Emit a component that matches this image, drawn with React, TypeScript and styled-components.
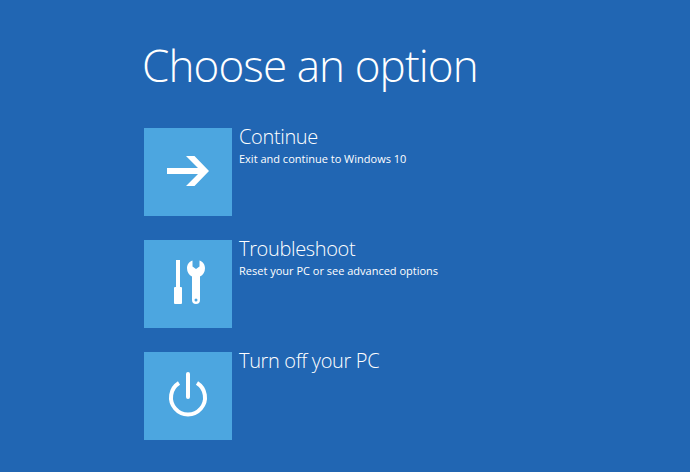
import React from 'react';
import styled, { createGlobalStyle } from 'styled-components';

const GlobalStyle = createGlobalStyle`
  html, body {
    margin: 0;
    padding: 0;
    background: #2166b3;
  }
`;

const Screen = styled.div`
  width: 690px;
  height: 472px;
  overflow: hidden;
  box-sizing: border-box;
  padding: 34px 0 0 144px;
  background: #2166b3;
  color: #fff;
  font-family: "Open Sans", "Noto Sans", sans-serif;
`;

const Title = styled.h1`
  margin: 0 0 32px -2px;
  height: 62px;
  font-size: 44px;
  line-height: 62px;
  font-weight: 300;
  letter-spacing: -0.9px;
  white-space: nowrap;
`;

const Options = styled.div`
  display: flex;
  flex-direction: column;
  gap: 24px;
`;

const Option = styled.div`
  display: flex;
  gap: 7px;
  height: 88px;
`;

const Tile = styled.div`
  flex: none;
  width: 88px;
  height: 88px;
  background: #4ca6e0;

  svg {
    display: block;
  }
`;

const Name = styled.div`
  font-size: 20px;
  line-height: 18px;
  font-weight: 300;
  letter-spacing: -0.35px;
  white-space: nowrap;
`;

const Detail = styled.div`
  margin-top: 5px;
  font-size: 11px;
  line-height: 16px;
  font-weight: 400;
  white-space: nowrap;
`;

const ArrowIcon = () => (
  <svg width="88" height="88" viewBox="0 0 88 88" fill="#fff">
    <path d="M42 28h8.500L65 43 50.500 58H42l12-12H23v-6h31z" />
  </svg>
);

const ToolsIcon = () => (
  <svg width="88" height="88" viewBox="0 0 88 88" fill="#fff">
    <path d="M32 20h4v27h-4z" />
    <rect x="30" y="47" width="8" height="17" rx="1" />
    <path
      fillRule="evenodd"
      d="M48.500 20.500v6l3.500 2.500 3.500-2.500v-6c3.500 1 5.500 4.200 5.500 7.800 0 3.700-2 6.900-5 8.200v23.500a4 4 0 0 1-8 0V36.500c-3-1.300-5-4.500-5-8.200 0-3.600 2-6.800 5.500-7.800zM52 58.500a1.500 1.500 0 1 0 0 3 1.500 1.500 0 0 0 0-3z"
    />
  </svg>
);

const PowerIcon = () => (
  <svg width="88" height="88" viewBox="0 0 88 88" fill="none" stroke="#fff" strokeWidth="4" strokeLinecap="round">
    <path d="M44 22v23" />
    <path d="M35 31a17 17 0 1 0 18 0" strokeLinecap="butt" />
  </svg>
);

const options = [
  { name: 'Continue', detail: 'Exit and continue to Windows 10', icon: <ArrowIcon /> },
  { name: 'Troubleshoot', detail: 'Reset your PC or see advanced options', icon: <ToolsIcon /> },
  { name: 'Turn off your PC', icon: <PowerIcon /> },
];

const App = () => (
  <>
    <GlobalStyle />
    <Screen>
      <Title>Choose an option</Title>
      <Options>
        {options.map((item) => (
          <Option key={item.name}>
            <Tile>{item.icon}</Tile>
            <div>
              <Name>{item.name}</Name>
              {item.detail && <Detail>{item.detail}</Detail>}
            </div>
          </Option>
        ))}
      </Options>
    </Screen>
  </>
);

export default App;
